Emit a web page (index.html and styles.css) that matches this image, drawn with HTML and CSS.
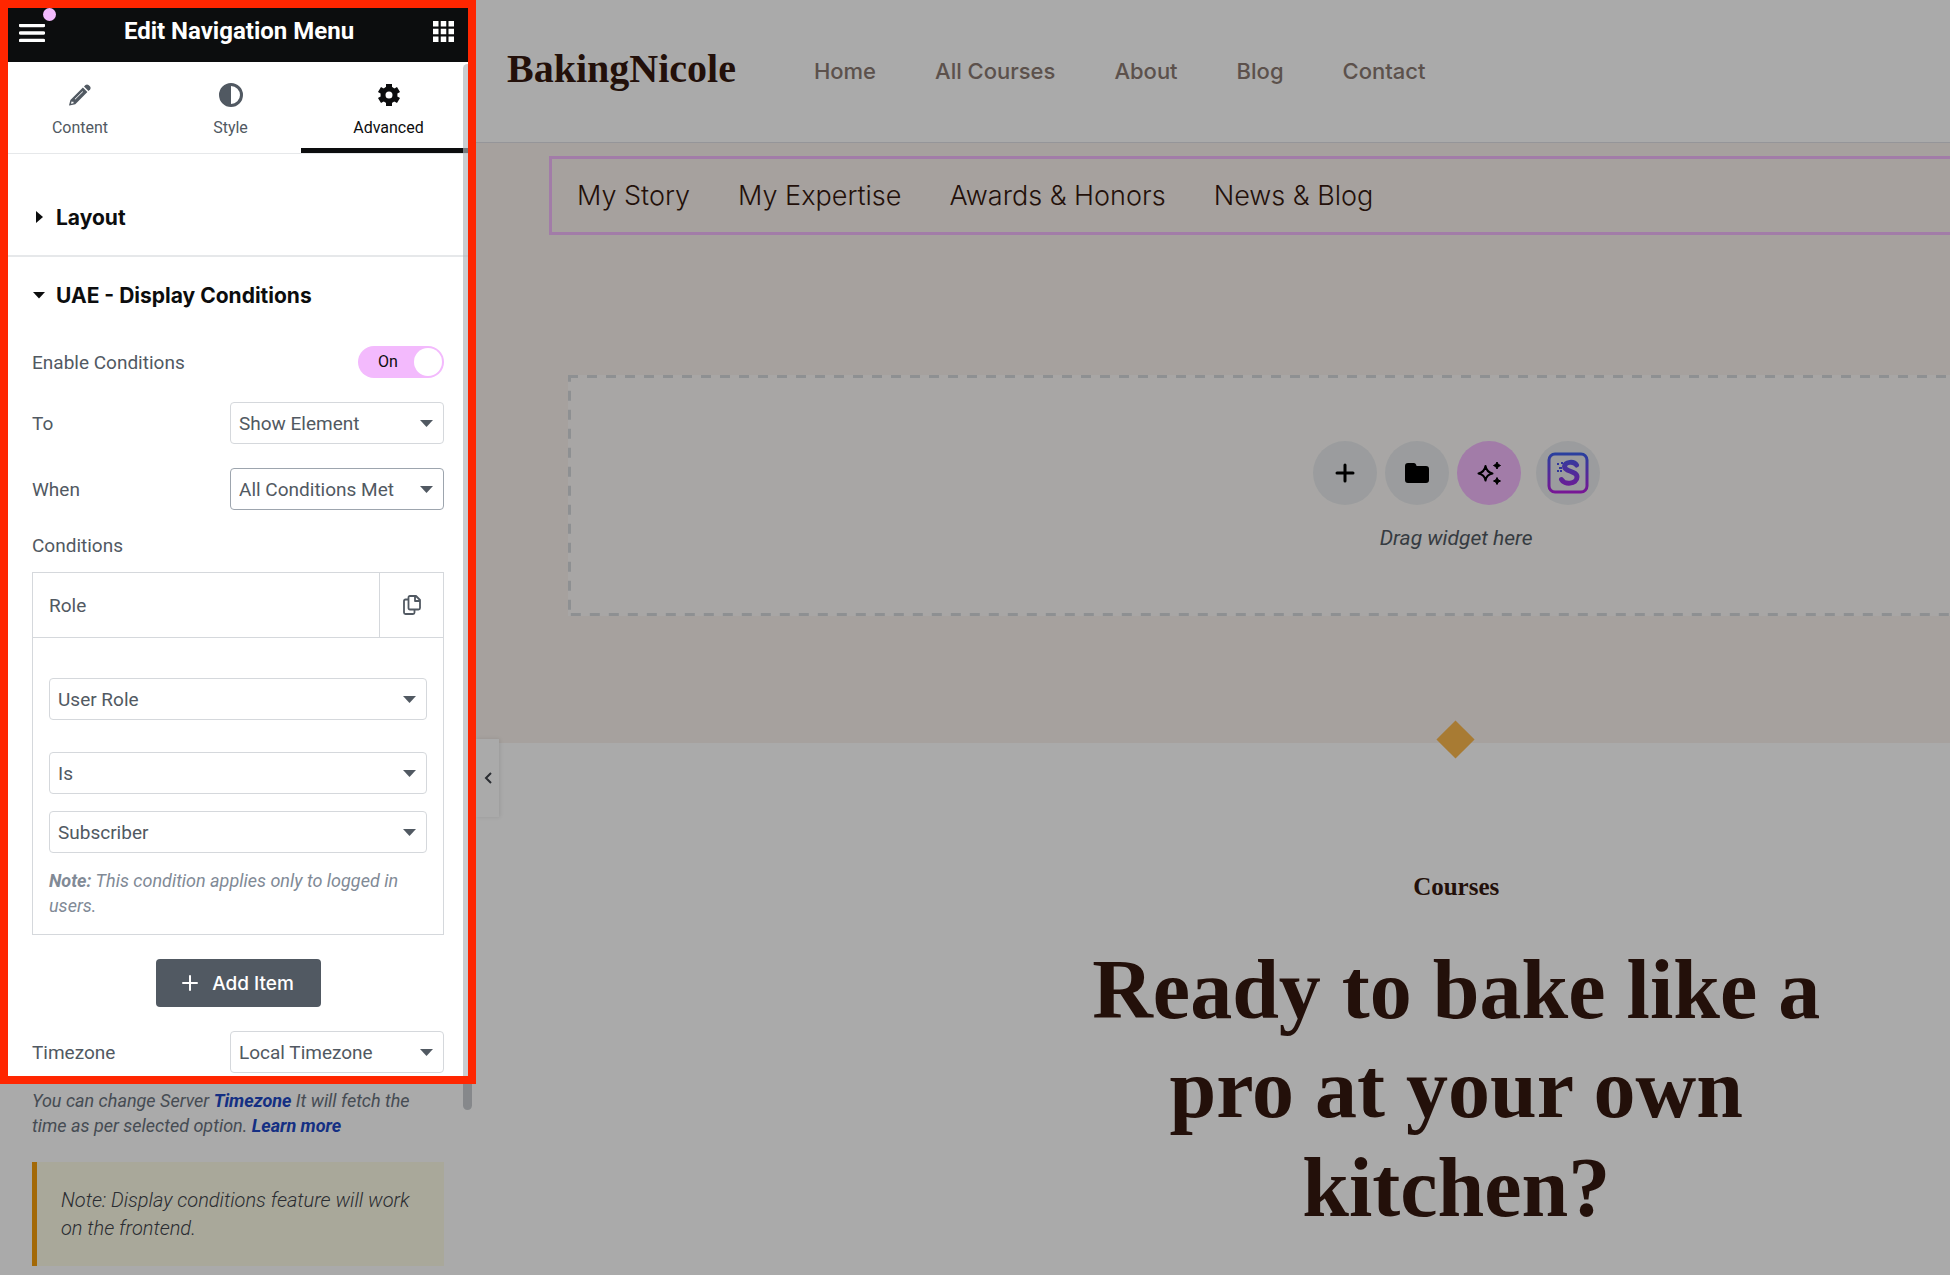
FILE: index.html
```html
<!DOCTYPE html>
<html lang="en">
<head>
    <meta charset="UTF-8">
    <title>Edit Navigation Menu</title>
    <link rel="stylesheet" href="styles.css">
</head>
<body>

<div class="editor">
    <aside class="panel">
        <header class="panel-header">
            <button class="icon-button" aria-label="Menu">
                <svg width="26" height="18" viewBox="0 0 26 18"><path d="M1.5 1.5h23M1.5 9h23M1.5 16.5h23" stroke="#fff" stroke-width="3.400" stroke-linecap="round"/></svg>
                <span class="badge"></span>
            </button>
            <h1>Edit Navigation Menu</h1>
            <button class="icon-button" aria-label="Widgets">
                <svg width="21" height="21" viewBox="0 0 21 21" fill="#fff"><path d="M0 0h5.500v5.500H0zM7.750 0h5.500v5.500h-5.500zM15.500 0H21v5.500h-5.500zM0 7.750h5.500v5.500H0zM7.750 7.750h5.500v5.500h-5.500zM15.500 7.750H21v5.500h-5.500zM0 15.500h5.500V21H0zM7.750 15.500h5.500V21h-5.500zM15.500 15.500H21V21h-5.500z"/></svg>
            </button>
        </header>

        <nav class="tabs">
            <button class="tab">
                <svg width="24" height="24" viewBox="0 0 24 24" fill="#515962"><path d="M16 3.500l1.500-1.500q1.500-1.200 3 0l1.600 1.600q1.200 1.400 0 2.900L20.500 8z"/><path fill-rule="evenodd" d="M14.900 4.600l4.500 4.500L7.300 21.200 1.500 22.600q-.5 0-.4-.5L2.400 16.900zM14.600 8.200L6.700 16.100l.5.500 7.900-7.900zM3.600 18.300l-.6 2.500 2.500-.6v-1.500H3.900z"/></svg>
                Content
            </button>
            <button class="tab">
                <svg width="24" height="24" viewBox="0 0 24 24"><circle cx="12" cy="12" r="10.500" fill="none" stroke="#515962" stroke-width="3"/><path d="M12 1a11 11 0 0 0 0 22z" fill="#515962"/></svg>
                Style
            </button>
            <button class="tab active">
                <svg width="24" height="24" viewBox="0 0 24 24" fill="none"><circle cx="12" cy="12" r="6" stroke="#0c0d0e" stroke-width="5"/><path d="M12 1v5M12 18v5M2.500 6.500l4.300 2.500M17.200 15l4.300 2.500M2.500 17.500L6.800 15M17.200 9l4.300-2.500" stroke="#0c0d0e" stroke-width="6"/></svg>
                Advanced
            </button>
        </nav>

        <button class="section">
            <svg width="12" height="12" viewBox="0 0 12 12"><path d="M3 0l7 6-7 6z" fill="#0c0d0e"/></svg>
            Layout
        </button>
        <button class="section open">
            <svg width="12" height="12" viewBox="0 0 12 12"><path d="M0 3h12L6 9.500z" fill="#0c0d0e"/></svg>
            UAE - Display Conditions
        </button>

        <div class="controls">
            <div class="control switch-row">
                <label for="enable">Enable Conditions</label>
                <span class="switch">
                    <input type="checkbox" id="enable" checked>
                    <span class="switch-text">On</span>
                </span>
            </div>
            <div class="control">
                <label for="to">To</label>
                <select id="to"><option>Show Element</option></select>
            </div>
            <div class="control">
                <label for="when">When</label>
                <select id="when" class="focused"><option>All Conditions Met</option></select>
            </div>

            <h2>Conditions</h2>
            <div class="repeater">
                <div class="repeater-head">
                    <button class="repeater-title">Role</button>
                    <button class="repeater-copy" aria-label="Duplicate">
                        <svg width="20" height="20" viewBox="0 0 20 20" fill="none" stroke="#515962" stroke-width="1.800" stroke-linejoin="round"><path d="M8 1h6l4 4v8q0 1.500-1.500 1.500H8Q6.500 14.500 6.500 13V2.500Q6.500 1 8 1zM13 1v5h5M6.500 4.500H3.500Q2 4.500 2 6v11.500Q2 19 3.500 19H11q1.500 0 1.500-1.500v-3"/></svg>
                    </button>
                </div>
                <div class="repeater-body">
                    <select class="type" aria-label="Condition"><option>User Role</option></select>
                    <select class="operator" aria-label="Operator"><option>Is</option></select>
                    <select class="value" aria-label="Role"><option>Subscriber</option></select>
                    <p class="description"><b>Note:</b> This condition applies only to logged in users.</p>
                </div>
            </div>

            <button class="add-item">
                <svg width="16" height="16" viewBox="0 0 16 16"><path d="M8 1v14M1 8h14" stroke="#fff" stroke-width="2" stroke-linecap="round"/></svg>
                Add Item
            </button>

            <div class="control">
                <label for="timezone">Timezone</label>
                <select id="timezone"><option>Local Timezone</option></select>
            </div>
            <p class="description">You can change Server <a href="#">Timezone</a> It will fetch the time as per selected option. <a href="#">Learn more</a></p>

            <p class="notice">Note: Display conditions feature will work on the frontend.</p>
        </div>
        <div class="scrollbar"></div>
    </aside>

    <main class="preview">
        <div class="page">
            <header class="site-header">
                <a class="logo" href="#">BakingNicole</a>
                <nav class="site-nav">
                    <a href="#">Home</a>
                    <a href="#">All Courses</a>
                    <a href="#">About</a>
                    <a href="#">Blog</a>
                    <a href="#">Contact</a>
                </nav>
            </header>

            <section class="hero">
                <nav class="sub-nav">
                    <a href="#">My Story</a>
                    <a href="#">My Expertise</a>
                    <a href="#">Awards &amp; Honors</a>
                    <a href="#">News &amp; Blog</a>
                </nav>
                <div class="drop-area">
                    <svg class="drop-outline" width="100%" height="100%"><rect width="100%" height="100%" fill="none" stroke="#d5d8dc" stroke-width="6" stroke-dasharray="10 9"/></svg>
                    <div class="drop-buttons">
                        <button class="round" aria-label="Add container">
                            <svg width="20" height="20" viewBox="0 0 20 20"><path d="M10 2v16M2 10h16" stroke="#000" stroke-width="3" stroke-linecap="round"/></svg>
                        </button>
                        <button class="round" aria-label="Add template">
                            <svg width="24" height="22" viewBox="0 0 24 22"><path d="M3 1h6q1.500 0 2 1.500l.6 1.500H21q3 0 3 3v11q0 3-3 3H3q-3 0-3-3V4q0-3 3-3z"/></svg>
                        </button>
                        <button class="round pink" aria-label="Build with AI">
                            <svg width="24" height="24" viewBox="0 0 24 24"><path d="M8.500 5q1 6 7 7.500-6 1-7 7-1-6-7-7 6-1.500 7-7.500z" fill="none" stroke="#000" stroke-width="2" stroke-linejoin="round"/><path d="M20 1l1.200 2.300L23.500 4.500l-2.300 1.200L20 8l-1.200-2.300-2.300-1.200 2.300-1.200zM20 16.500l1.200 2.300 2.300 1.200-2.300 1.200L20 23.500l-1.200-2.300-2.300-1.200 2.300-1.200z" stroke="#000"/></svg>
                        </button>
                        <button class="round starter" aria-label="Starter templates">
                            <svg width="42" height="42" viewBox="0 0 42 42" fill="none">
                                <defs><linearGradient id="brand" x1="0" y1="0" x2="0" y2="42" gradientUnits="userSpaceOnUse"><stop offset="0" stop-color="#3a62ee"/><stop offset="1" stop-color="#b81fe0"/></linearGradient></defs>
                                <rect x="2" y="2" width="38" height="38" rx="6" stroke="url(#brand)" stroke-width="3"/>
                                <path d="M29.500 13C27 9 18 9.500 17.500 14.500c0 5.500 12.500 4 12.500 10.500 0 7.500-13 8-15.500 2.500" stroke="url(#brand)" stroke-width="5" stroke-linecap="round"/>
                                <path d="M10 12h2M12 16h3M10 19h2M14 11h2M13 19h2" stroke="#4a50e8" stroke-width="2"/>
                            </svg>
                        </button>
                    </div>
                    <p>Drag widget here</p>
                </div>
                <span class="diamond"></span>
            </section>

            <section class="courses">
                <p class="eyebrow">Courses</p>
                <h2>Ready to bake like a pro at your own kitchen?</h2>
            </section>
        </div>
        <button class="collapse" aria-label="Hide panel">
            <svg width="8" height="12" viewBox="0 0 8 12"><path d="M7 1L2 6l5 5" fill="none" stroke="#3f444b" stroke-width="2"/></svg>
        </button>
    </main>

    <div class="spotlight"></div>
</div>

</body>
</html>
```
FILE: styles.css
```css
* {
    box-sizing: border-box;
}
body {
    margin: 0;
    font-family: Roboto, "Liberation Sans", sans-serif;
    font-size: 19px;
    color: #515962;
    background: #fff;
}
button, select {
    font: inherit;
    color: inherit;
    background: none;
    border: none;
    padding: 0;
    margin: 0;
}
a {
    text-decoration: none;
    color: inherit;
}
h1, h2, p {
    margin: 0;
}
svg {
    display: block;
}
.editor {
    position: relative;
    display: flex;
    height: 100vh;
    overflow: hidden;
}

/* Left panel */
.panel {
    position: relative;
    flex: none;
    width: 476px;
    background: #fff;
}
.panel-header {
    display: flex;
    align-items: flex-end;
    justify-content: space-between;
    height: 62px;
    padding: 0 22px 20px 19px;
    background: #0c0d0e;
    color: #fff;
}
.panel-header h1 {
    font-size: 24px;
    line-height: 22px;
    font-weight: 700;
}
.icon-button {
    position: relative;
}
.badge {
    position: absolute;
    top: -16px;
    right: -11px;
    width: 13px;
    height: 13px;
    border-radius: 50%;
    background: #f3bafd;
}
.tabs {
    display: grid;
    grid-template-columns: 160px 141px 1fr;
    height: 92px;
    border-bottom: 1px solid #e6e8ea;
}
.tab {
    display: flex;
    flex-direction: column;
    align-items: center;
    gap: 9px;
    padding-top: 21px;
    font-size: 16px;
    line-height: 24px;
}
.tab.active {
    color: #0c0d0e;
    border-bottom: 5px solid #0c0d0e;
}
.section {
    display: flex;
    align-items: center;
    gap: 11px;
    width: 100%;
    height: 78px;
    padding-left: 33px;
    font-family: Inter, sans-serif;
    font-size: 21px;
    font-weight: 700;
    color: #0c0d0e;
    border-bottom: 2px solid #e6e8ea;
}
.tabs + .section {
    margin-top: 25px;
}
.section.open {
    height: 76px;
    border: none;
}
.controls {
    padding: 0 32px;
}
.control {
    display: flex;
    align-items: center;
    justify-content: space-between;
    margin-bottom: 24px;
}
.control select {
    width: 214px;
}
.switch-row {
    height: 32px;
    margin-top: 13px;
}
.switch {
    position: relative;
    width: 86px;
    height: 32px;
}
.switch input {
    appearance: none;
    display: block;
    width: 86px;
    height: 32px;
    margin: 0;
    padding: 2px;
    border-radius: 16px;
    background: #f3bafd;
}
.switch input::after {
    content: "";
    display: block;
    width: 28px;
    height: 28px;
    margin-left: auto;
    border-radius: 50%;
    background: #fff;
}
.switch-text {
    position: absolute;
    top: 0;
    left: 20px;
    font-size: 16px;
    line-height: 32px;
    color: #0c0d0e;
    pointer-events: none;
}
select {
    appearance: none;
    display: block;
    width: 100%;
    height: 42px;
    padding: 0 8px;
    border: 1px solid #d5d8dc;
    border-radius: 4px;
    background: url("data:image/svg+xml,%3Csvg xmlns='http://www.w3.org/2000/svg' width='13' height='7'%3E%3Cpath d='M0 0h13L6.500 7z' fill='%23515962'/%3E%3C/svg%3E") no-repeat right 10px center;
}
select.focused {
    border-color: #9da5ae;
}
.controls h2 {
    margin-bottom: 14px;
    font-size: 19px;
    line-height: 24px;
    font-weight: 400;
}
.repeater {
    border: 1px solid #d5d8dc;
}
.repeater-head {
    display: flex;
    height: 65px;
    border-bottom: 1px solid #d5d8dc;
}
.repeater-title {
    flex: 1;
    padding-left: 16px;
    text-align: left;
}
.repeater-copy {
    display: flex;
    align-items: center;
    justify-content: center;
    width: 64px;
    border-left: 1px solid #d5d8dc;
}
.repeater-body {
    padding: 40px 16px 16px;
}
.repeater-body select {
    margin-bottom: 17px;
}
.repeater-body .type {
    margin-bottom: 32px;
}
.repeater-body .value {
    margin-bottom: 15px;
}
.description {
    font-size: 18px;
    line-height: 25px;
    font-style: italic;
    color: #818a96;
}
.controls > .description {
    color: #69727d;
}
.description b, .description a {
    font-weight: 700;
}
.description a {
    color: #2047c5;
}
.add-item {
    display: flex;
    align-items: center;
    justify-content: center;
    gap: 14px;
    width: 165px;
    height: 48px;
    margin: 24px auto;
    border-radius: 4px;
    background: #515962;
    color: #fff;
    font-family: Inter, sans-serif;
    font-weight: 500;
}
.add-item + .control {
    margin-bottom: 15px;
}
.notice {
    margin-top: 24px;
    padding: 24px;
    border-left: 5px solid #f59e0b;
    background: #fefce8;
    font-size: 20px;
    line-height: 28px;
    font-style: italic;
    font-weight: 300;
    color: #3f444b;
}
.scrollbar {
    position: absolute;
    top: 64px;
    right: 4px;
    width: 9px;
    height: 1046px;
    border-radius: 5px;
    background: rgba(174, 178, 184, 0.65);
}

/* Page preview */
.preview {
    position: relative;
    flex: 1;
    overflow: hidden;
}
.page {
    width: 133%;
    background: #fff;
}
.site-header {
    display: flex;
    align-items: center;
    gap: 78px;
    height: 143px;
    padding-left: 31px;
    border-bottom: 1px solid #e0e0e6;
}
.logo {
    padding-bottom: 6px;
    font-family: "Liberation Serif", serif;
    font-size: 40px;
    font-weight: 700;
    color: #35190f;
}
.site-nav {
    display: flex;
    gap: 59px;
    font-family: Inter, sans-serif;
    font-size: 22px;
    font-weight: 500;
    color: #8a7a72;
}
.hero {
    position: relative;
    height: 600px;
    padding: 13px 0 0 73px;
    background: #f9f2ed;
}
.sub-nav {
    display: flex;
    align-items: center;
    gap: 48px;
    height: 79px;
    padding-left: 25px;
    border: 3px solid #f3bafd;
    font-family: Inter, sans-serif;
    font-size: 27px;
    font-weight: 300;
    color: #35190f;
}
.drop-area {
    position: relative;
    display: flex;
    flex-direction: column;
    align-items: center;
    height: 241px;
    margin: 140px 92px 0 19px;
    padding-top: 66px;
    background: #fcfaf8;
    font-size: 21px;
    font-style: italic;
    color: #515962;
}
.drop-outline {
    position: absolute;
    top: 0;
    left: 0;
}
.drop-buttons {
    display: flex;
    gap: 8px;
    margin-bottom: 21px;
}
.round {
    display: flex;
    align-items: center;
    justify-content: center;
    width: 64px;
    height: 64px;
    border-radius: 50%;
    background: #e9ebed;
}
.round.pink {
    background: #f3bafd;
}
.round.starter {
    margin-left: 7px;
}
.diamond {
    position: absolute;
    left: 50%;
    bottom: -10px;
    width: 27px;
    height: 27px;
    margin-left: -14px;
    background: #fdb94d;
    transform: rotate(45deg);
}
.courses {
    padding-top: 130px;
    font-family: "Liberation Serif", serif;
    font-weight: 700;
    text-align: center;
    color: #35190f;
}
.eyebrow {
    font-size: 25px;
    line-height: 28px;
}
.courses h2 {
    max-width: 800px;
    margin: 39px auto 0;
    font-size: 84px;
    line-height: 99px;
}
.collapse {
    position: absolute;
    top: 739px;
    left: 0;
    display: flex;
    align-items: center;
    justify-content: center;
    width: 23px;
    height: 78px;
    background: #fff;
    box-shadow: 1px 0 4px rgba(0, 0, 0, 0.1);
}

/* Highlights the settings and dims everything around them */
.spotlight {
    position: absolute;
    top: 0;
    left: 0;
    width: 476px;
    height: 1084px;
    border: 8px solid #ff2600;
    box-shadow: 0 0 0 2000px rgba(0, 0, 0, 0.333);
    pointer-events: none;
}
```
